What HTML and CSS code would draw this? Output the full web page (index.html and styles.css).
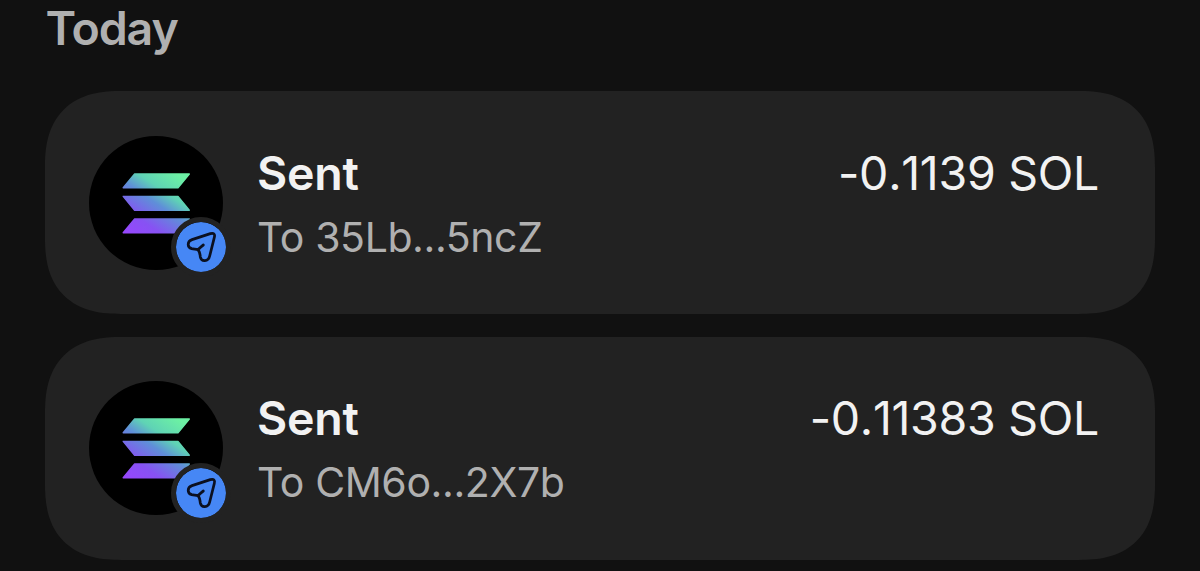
FILE: index.html
```html
<!DOCTYPE html>
<html lang="en">
<head>
<meta charset="utf-8">
<title>Activity</title>
<link rel="stylesheet" href="styles.css">
</head>
<body>
<svg class="defs" aria-hidden="true">
  <defs>
    <linearGradient id="sol" gradientUnits="userSpaceOnUse" x1="42" y1="104" x2="92" y2="30">
      <stop offset="0" stop-color="#9945ff"/>
      <stop offset=".25" stop-color="#8752f3"/>
      <stop offset=".5" stop-color="#5f8fd8"/>
      <stop offset=".66" stop-color="#5fd3b5"/>
      <stop offset=".9" stop-color="#6cf0a4"/>
    </linearGradient>
    <symbol id="coin" viewBox="0 0 134 134">
      <circle cx="67" cy="67" r="67" fill="#000"/>
      <g fill="url(#sol)" stroke="url(#sol)" stroke-width="1.4" stroke-linejoin="round">
        <path d="M45.6 38H100.3L89 51.8H34.2Z"/>
        <path d="M34.2 60.4H89L100.3 74.2H45.6Z"/>
        <path d="M45.6 83H100.3L89 96.8H34.2Z"/>
      </g>
    </symbol>
    <symbol id="plane" viewBox="0 0 150 150">
      <path d="M48 53L103 35Q119 31 115 46L101 102C97 120 76 120 73 105C72 95 71 88 66 83C60 80 55 82 47 80C33 76 33 58 48 53ZM66 83C71 79 76 73 82 69" fill="none" stroke="#0b1020" stroke-width="8.2" stroke-linecap="round" stroke-linejoin="round"/>
    </symbol>
  </defs>
</svg>
<main class="activity">
  <h1 class="day">Today</h1>
  <ul class="list">
    <li class="card">
      <div class="token">
        <svg class="coin"><use href="#coin"/></svg>
        <span class="badge"><svg class="plane"><use href="#plane"/></svg></span>
      </div>
      <div class="info">
        <span class="title">Sent</span>
        <span class="address">To 35Lb...5ncZ</span>
      </div>
      <span class="amount">-0.1139 SOL</span>
    </li>
    <li class="card">
      <div class="token">
        <svg class="coin"><use href="#coin"/></svg>
        <span class="badge"><svg class="plane"><use href="#plane"/></svg></span>
      </div>
      <div class="info">
        <span class="title">Sent</span>
        <span class="address">To CM6o...2X7b</span>
      </div>
      <span class="amount">-0.11383 SOL</span>
    </li>
  </ul>
</main>
</body>
</html>
```
FILE: styles.css
```css
* { box-sizing: border-box; }
body {
  margin: 0;
  height: 571px;
  overflow: hidden;
  background: #111;
  color: #f2f2f2;
  font-family: Inter, "Liberation Sans", sans-serif;
}
.defs { position: absolute; width: 0; height: 0; }
.activity { padding: 0 45px; }
.day {
  height: 91px;
  margin: 0;
  padding-left: 0.5px;
  color: #b0b0b0;
  font-size: 46.5px;
  font-weight: 600;
  line-height: 56px;
  letter-spacing: -1.1px;
}
.list {
  display: flex;
  flex-direction: column;
  gap: 22.5px;
  margin: 0;
  padding: 0;
  list-style: none;
}
.card {
  display: flex;
  height: 223px;
  padding: 44.5px 56px 0 44px;
  border-radius: 60px;
  background: #222;
}
@supports (corner-shape: superellipse(1.3)) {
  .card {
    border-radius: 76px;
    corner-shape: superellipse(1.3);
  }
}
.token { position: relative; width: 134px; height: 134px; }
.coin { display: block; width: 134px; height: 134px; }
.badge {
  position: absolute;
  right: -8px;
  bottom: -7.5px;
  width: 60px;
  height: 60px;
  border: 5px solid #222;
  border-radius: 50%;
  background: #4687f5;
  background-clip: padding-box;
}
.plane { display: block; width: 50px; height: 50px; }
.info {
  display: flex;
  flex: 1;
  flex-direction: column;
  padding: 9px 0 0 34px;
}
.title {
  font-size: 46.5px;
  font-weight: 600;
  line-height: 56px;
  letter-spacing: -0.2px;
}
.address {
  margin-top: 11px;
  color: #b0b0b0;
  font-size: 41px;
  line-height: 50px;
  letter-spacing: -0.4px;
}
.amount {
  padding-top: 9px;
  font-size: 46.5px;
  font-kerning: none;
  line-height: 56px;
  letter-spacing: -0.3px;
}
```
